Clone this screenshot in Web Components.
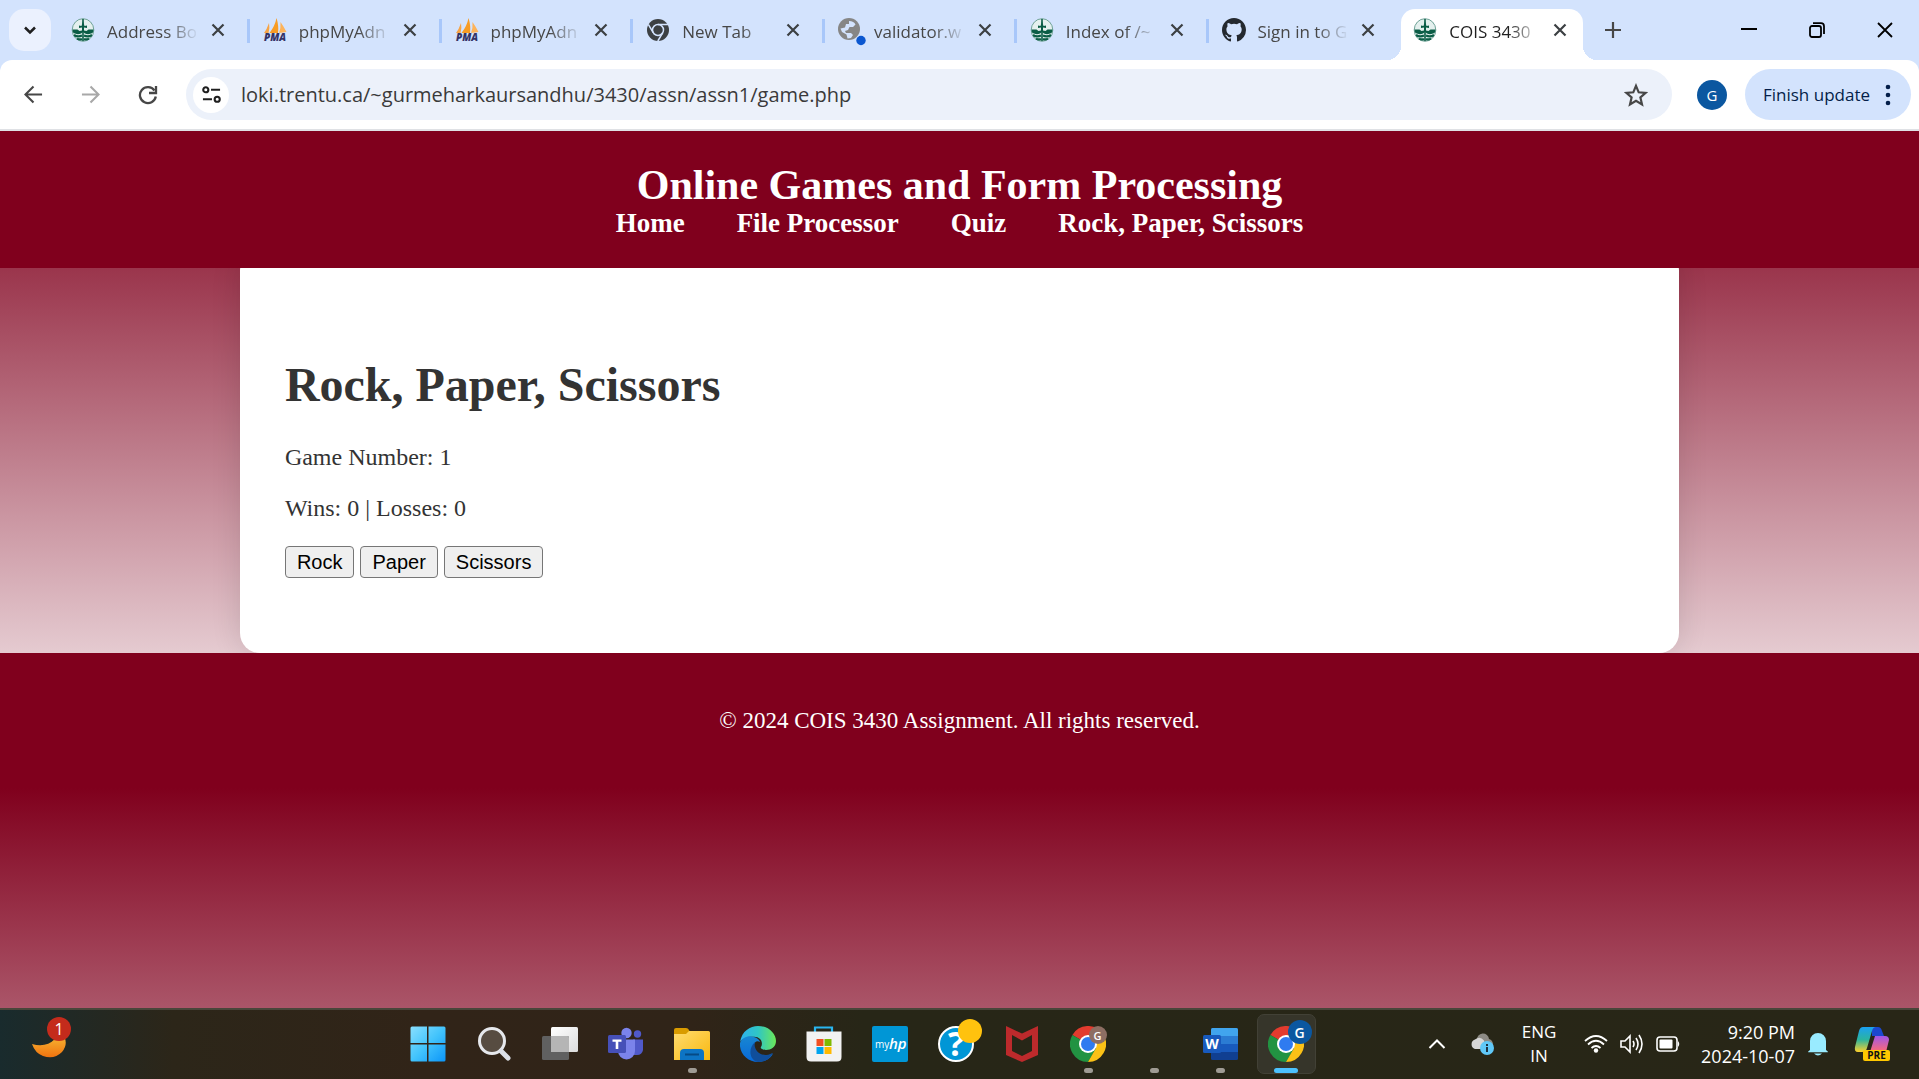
<!DOCTYPE html>
<html lang="en">
<head>
<meta charset="utf-8">
<title>COIS 3430</title>
<style>
html,body{margin:0;height:100%}
body{font-family:"Open Sans","Noto Sans",sans-serif;overflow:hidden}
</style>
</head>
<body>
<desktop-screen>
  <browser-window slot="window">
    <site-page>
      <game-panel heading="Rock, Paper, Scissors"></game-panel>
    </site-page>
  </browser-window>
</desktop-screen>
<script>
const ICONS = {
  down:`<svg viewBox="0 0 24 24"><path d="M6 9l6 6 6-6" fill="none" stroke="#1f1f1f" stroke-width="3"/></svg>`,
  trent:`<svg viewBox="0 0 24 24"><ellipse cx="12" cy="12" rx="10.8" ry="11.3" fill="#e4f0ee" stroke="#6fa297" stroke-width="1"/><path d="M1.500 11.500h5l2 1.500 2.500-.5V9.500L8 10V7.500l2.500.5L12 3l1.500 5 2.500-.5V10l-3-.5v3l2.500.5 2-1.500h5q0 2-1 3.500-4 2-7.500.5L12 14l-2 1.500q-3.500 1.500-7.500-.5-1-1.500-1-3.500z" fill="#0b5d46"/><path d="M12 1v22" stroke="#0b5d46" stroke-width="1.600"/><g fill="none" stroke="#0b5d46" stroke-width="2.200"><path d="M3 17Q7 19.500 11 17.500M21 17Q17 19.500 13 17.500M6 20.700Q9 22 11 21M18 20.700Q15 22 13 21"/></g></svg>`,
  pma:`<svg viewBox="0 0 24 24"><path d="M1 15Q4 11 6 5Q7 10 5.500 15z" fill="#f7a445"/><path d="M6.500 15Q12 8 13.500 0Q16 8 15 15z" fill="#f89c24"/><path d="M16 15Q18 10 17.500 4Q21 9 23.500 14z" fill="#fdb35a"/><text x="12" y="23" text-anchor="middle" font-family="Open Sans,sans-serif" font-style="italic" font-weight="800" font-size="10" fill="#333366">PMA</text></svg>`,
  chromegrey:`<svg viewBox="0 0 24 24"><circle cx="12" cy="12" r="11" fill="#3c4043"/><g stroke="#d3e3fd" stroke-width="1.500" fill="none"><path d="M12 6.500H22M7.200 14.700L2.300 6.400M16.800 14.700L11.800 23"/><circle cx="12" cy="12" r="5.500"/></g><circle cx="12" cy="12" r="3.700" fill="#3c4043"/></svg>`,
  globe:`<svg viewBox="0 0 24 24" style="overflow:visible"><circle cx="11" cy="11" r="11" fill="#868686"/><path d="M11 3q5 0 6.500 3.500L15 9h-3.500L10 12l-3 1 1 2h5l2 2-2 3-3.500.5-1-4L4 14 2.500 10.500 7 9.500 8 6h3z" fill="#d3e3fd"/><circle cx="23" cy="22.500" r="4.700" fill="#0b57d0"/></svg>`,
  github:`<svg viewBox="0 0 16 16"><path fill="#24292f" d="M8 0C3.580 0 0 3.580 0 8c0 3.540 2.290 6.530 5.470 7.590.4.070.55-.17.55-.38 0-.19-.01-.82-.01-1.490-2.010.37-2.530-.49-2.690-.94-.09-.23-.48-.94-.82-1.130-.28-.15-.68-.52-.01-.53.63-.01 1.080.58 1.230.82.72 1.210 1.870.87 2.330.66.07-.52.28-.87.51-1.070-1.780-.2-3.640-.89-3.640-3.950 0-.87.31-1.590.82-2.150-.08-.2-.36-1.020.08-2.120 0 0 .67-.21 2.200.82a7.500 7.500 0 014 0c1.530-1.040 2.200-.82 2.200-.82.44 1.100.16 1.920.08 2.120.51.56.82 1.270.82 2.150 0 3.070-1.870 3.750-3.650 3.950.29.25.54.73.54 1.480 0 1.070-.01 1.930-.01 2.200 0 .21.15.46.55.38A8 8 0 0016 8c0-4.420-3.580-8-8-8z"/></svg>`,
  close:`<svg viewBox="0 0 14 14"><path d="M1.500 1.500l11 11m0-11l-11 11" stroke="#3c4043" stroke-width="2.200"/></svg>`,
  plus:`<svg viewBox="0 0 16 16"><path d="M8 0v16M0 8h16" stroke="#474747" stroke-width="2.200"/></svg>`,
  min:`<svg viewBox="0 0 16 16"><path d="M0 7h16" stroke="#000" stroke-width="2"/></svg>`,
  restore:`<svg viewBox="0 0 16 16"><rect x="1" y="4" width="11" height="11" rx="2" fill="none" stroke="#000" stroke-width="1.800"/><path d="M4 1.200h8a3 3 0 013 3V12" fill="none" stroke="#000" stroke-width="1.800"/></svg>`,
  winclose:`<svg viewBox="0 0 16 16"><path d="M1 1l14 14M15 1L1 15" stroke="#000" stroke-width="1.800"/></svg>`,
  back:`<svg viewBox="0 0 20 20"><path d="M19 10H2M10 1.500L1.500 10l8.500 8.500" fill="none" stroke="#474747" stroke-width="2.200"/></svg>`,
  forward:`<svg viewBox="0 0 20 20"><path d="M1 10h17M10 1.500l8.500 8.500-8.500 8.500" fill="none" stroke="#a8a8a8" stroke-width="2.200"/></svg>`,
  reload:`<svg viewBox="0 0 20 20"><path d="M17.800 11.500A8 8 0 1116.500 5.500" fill="none" stroke="#474747" stroke-width="2.300"/><path d="M18 1v7h-7" fill="none" stroke="#474747" stroke-width="2.300"/></svg>`,
  tune:`<svg viewBox="0 0 20 20"><g fill="none" stroke="#1f1f1f" stroke-width="2.200"><circle cx="4" cy="5" r="2.700"/><path d="M9.500 5H19M1 15h9.500"/><circle cx="16" cy="15" r="2.700"/></g></svg>`,
  star:`<svg viewBox="0 0 24 24"><path d="M12 2.800l2.700 6.500 7 .6-5.300 4.600 1.600 6.900L12 17.700l-6 3.700 1.600-6.900-5.300-4.600 7-.6z" fill="none" stroke="#474747" stroke-width="2.200"/></svg>`,
  dots:`<svg viewBox="0 0 6 22"><g fill="#041e49"><circle cx="3" cy="3" r="2.300"/><circle cx="3" cy="11" r="2.300"/><circle cx="3" cy="19" r="2.300"/></g></svg>`,
  moon:`<svg viewBox="0 0 36 36"><defs><linearGradient id="m" x2="0" y2="1"><stop offset="0" stop-color="#f7c53b"/><stop offset="1" stop-color="#f0730f"/></linearGradient></defs><path d="M30 5q9 12 1 21-8 8-19 4-8-3-11-12 14 4 23-5 4-4 6-8z" fill="url(#m)"/></svg>`,
  windows:`<svg viewBox="0 0 36 36"><defs><linearGradient id="w" x1="0" y1="0" x2="36" y2="36" gradientUnits="userSpaceOnUse"><stop stop-color="#8be0ff"/><stop offset=".5" stop-color="#43c4fc"/><stop offset="1" stop-color="#0a94f8"/></linearGradient></defs><path fill="url(#w)" d="M2 .5h15v16.500H.500V2A1.500 1.500 0 012 .5zM18.500.5H34A1.500 1.500 0 0135.500 2v15h-17zM.5 18.500H17v17H2A1.500 1.500 0 01.500 34zM18.500 18.500h17V34a1.500 1.500 0 01-1.500 1.500H18.500z"/></svg>`,
  search:`<svg viewBox="0 0 36 36"><circle cx="16" cy="15" r="12.500" fill="#574c41" stroke="#e6e8ec" stroke-width="3"/><path d="M25 25l7 7" stroke="#dce0e8" stroke-width="5" stroke-linecap="round"/></svg>`,
  taskview:`<svg viewBox="0 0 36 36"><defs><linearGradient id="t" x2="1" y2="1"><stop stop-color="#fff"/><stop offset="1" stop-color="#dcdcdc"/></linearGradient></defs><rect x="9" y="1" width="27" height="25" rx="1.500" fill="url(#t)"/><rect x="0" y="10" width="27" height="24" rx="1.500" fill="#606060"/><path d="M9 10h16.500a1.500 1.500 0 011.500 1.500V26H9z" fill="#b5b5b5"/></svg>`,
  teams:`<svg viewBox="0 0 36 36"><circle cx="18.500" cy="7" r="5.200" fill="#7b83eb"/><circle cx="29.500" cy="8" r="3.700" fill="#5059c9"/><path d="M25 13.500h10V24q-1 5-6 5h-4z" fill="#5059c9"/><path d="M10 13.500h17V25a8.500 8.500 0 01-17 0z" fill="#7b83eb"/><rect x="0" y="9" width="18" height="18" rx="1.500" fill="#4650b8"/><path d="M4.500 13.500h9v2.300H10.300V23H7.700v-7.200H4.500z" fill="#fff"/></svg>`,
  folder:`<svg viewBox="0 0 36 36"><defs><linearGradient id="f" x2="1" y2="1"><stop stop-color="#ffdc70"/><stop offset="1" stop-color="#f9b80f"/></linearGradient></defs><path d="M0 4a2 2 0 012-2h10q2 0 3 2l1 2v6H0z" fill="#d99b00"/><path d="M0 8h12l3-3h19.500A1.500 1.500 0 0136 6.500V34H0z" fill="url(#f)"/><path d="M6 34V27q0-4 4-4h16q4 0 4 4v7z" fill="#0d74c4"/><path d="M11 28.500h14" stroke="#064a85" stroke-width="2"/></svg>`,
  edge:`<svg viewBox="0 0 36 36"><defs><linearGradient id="e" x2="1"><stop stop-color="#2cb0ef"/><stop offset=".5" stop-color="#30c6c4"/><stop offset="1" stop-color="#6be858"/></linearGradient><linearGradient id="e2" x2="0" y2="1"><stop stop-color="#1887d2"/><stop offset="1" stop-color="#0868d8"/></linearGradient></defs><path d="M0 16C2 5 10 0 18 0c11 0 18 8 18 15 0 6-5 9-10 9-4 0-6-2-5-3 2-3 1-9-5-10C9 10 3 12 0 16z" fill="url(#e)"/><path d="M0 17c2-6 9-8 14-6 4 1 6 4 6 5-3-2-7 0-6 6 1 7 9 12 19 6-4 6-10 8-15 8C8 36-1 28 0 17z" fill="url(#e2)"/><path d="M15 16c-2 7 4 13 11 13 3 0 6-2 7-2-3 6-8 9-15 9C9 34 8 22 15 16z" fill="#104e9b"/></svg>`,
  store:`<svg viewBox="0 0 36 36"><path d="M9 7V1.500h17V7" fill="none" stroke="#29b6f0" stroke-width="2.200"/><path d="M.5 5.500h35V31q0 4.500-4.500 4.500H5Q.5 35.500.5 31z" fill="#f2f2f2"/><path d="M10.500 13h7v7h-7z" fill="#f25022"/><path d="M18.500 13h7v7h-7z" fill="#7fba00"/><path d="M10.500 21h7v7h-7z" fill="#00a4ef"/><path d="M18.500 21h7v7h-7z" fill="#ffb900"/></svg>`,
  myhp:`<svg viewBox="0 0 36 36"><rect width="36" height="36" rx="2" fill="#0096d6"/><text x="3" y="22" font-family="Open Sans,sans-serif" font-size="10" fill="#fff">my</text><text x="17" y="23" font-family="Open Sans,sans-serif" font-size="15" font-style="italic" font-weight="600" fill="#fff">hp</text></svg>`,
  help:`<svg viewBox="0 0 36 36" style="overflow:visible"><circle cx="18" cy="18" r="17" fill="#0096d6" stroke="#fff" stroke-width="2"/><text x="18" y="30" text-anchor="middle" font-family="Open Sans,sans-serif" font-size="34" font-weight="700" fill="#fff">?</text><circle cx="32" cy="5" r="12" fill="#ffc20e"/></svg>`,
  mcafee:`<svg viewBox="0 0 36 36"><path fill="#bd2a2c" fill-rule="evenodd" d="M2 0l16 7.500L34 0v29l-16 7L2 29zM8 9v16l10 5 10-5V9l-10 5.500z"/></svg>`,
  word:`<svg viewBox="0 0 36 36"><rect x="9" y="2" width="27" height="32" rx="1.500" fill="#103f91"/><path d="M9 18h27v8H9z" fill="#185abd"/><path d="M9 10h27v8H9z" fill="#2b7cd3"/><path d="M9 10V3.500A1.500 1.500 0 0110.500 2h24A1.500 1.500 0 0136 3.500V10z" fill="#41a5ee"/><rect x="1" y="9" width="18" height="18" rx="1.500" fill="#185abd"/><text x="10" y="23" text-anchor="middle" font-family="Open Sans,sans-serif" font-size="14" font-weight="700" fill="#fff">W</text></svg>`,
  chrome:`<svg viewBox="0 0 36 36"><path d="M18 18L2.400 9A18 18 0 0133.600 9z" fill="#e33b2e"/><path d="M18 18L2.400 9A18 18 0 0018 36l8-13z" fill="#229342"/><path d="M18 9h15.600A18 18 0 0118 36l7.800-13.500z" fill="#fbc116"/><circle cx="18" cy="18" r="9" fill="#fff"/><circle cx="18" cy="18" r="7" fill="#2f7bf0"/></svg>`,
  blank:`<svg viewBox="0 0 36 36"></svg>`,
  up:`<svg viewBox="0 0 18 18"><path d="M1.500 13L9 5.500l7.500 7.500" fill="none" stroke="#fff" stroke-width="2"/></svg>`,
  cloud:`<svg viewBox="0 0 24 24"><path d="M7 8a6 6 0 0112-1q4 1 4 6l-4 3z" fill="#8d8b85"/><path d="M5 17a5 5 0 010-9.500q5-4 9 1l1 8.500z" fill="#d6d6d6"/><circle cx="17" cy="16" r="7" fill="#60c8f8"/><path d="M17 12v2M17 15v5" stroke="#1d3344" stroke-width="2"/></svg>`,
  wifi:`<svg viewBox="0 0 24 24"><g fill="none" stroke="#fff" stroke-width="1.800"><path d="M1 9Q12-1 23 9M4 12.500Q12 5 20 12.500M7.500 16q4.500-4 9 0"/></g><circle cx="12" cy="18.500" r="2.200" fill="#fff"/></svg>`,
  volume:`<svg viewBox="0 0 24 24"><g fill="none" stroke="#fff" stroke-width="1.600"><path d="M1 9h4l5-5v16l-5-5H1z"/><path d="M13 9q2 3 0 6M16 6q4 6 0 12M19 3q6 9 0 18"/></g></svg>`,
  battery:`<svg viewBox="0 0 24 24"><rect x="1" y="5" width="20" height="14" rx="3" fill="none" stroke="#fff" stroke-width="1.600"/><rect x="3.500" y="7.500" width="13" height="9" rx="1" fill="#fff"/><path d="M22 9q2.500 3 0 6z" fill="#fff"/></svg>`,
  bell:`<svg viewBox="0 0 20 24"><path d="M2 18V9a8 8 0 0116 0v9l1.800 1.500v.8H.2v-.8zM6 21.500h8q-4 4-8 0z" fill="#99ebff"/></svg>`,
  copilot:`<svg viewBox="0 0 36 36"><defs><linearGradient id="c" x2="0" y2="1"><stop stop-color="#1ba0f2"/><stop offset=".5" stop-color="#2bb4a0"/><stop offset="1" stop-color="#ffd02a"/></linearGradient><linearGradient id="c2" x2="0" y2="1"><stop stop-color="#a057e8"/><stop offset="1" stop-color="#ff6b70"/></linearGradient></defs><path d="M18 1h6q3 0 4 4l2 5H18z" fill="#1b48cf"/><path d="M9 1h13q-3 0-4 4l-5 17q-1 4-5 4H4q-4 0-3-5L5 5q1-4 4-4z" fill="url(#c)"/><path d="M21 10h10q4 0 4 4l-3 12H16z" fill="url(#c2)"/><rect x="9" y="24" width="27" height="11" rx="2" fill="#ffc800"/><text x="22.500" y="33" text-anchor="middle" font-family="Open Sans,sans-serif" font-size="10" font-weight="700" fill="#111">PRE</text></svg>`
};

function define(name, render) {
  customElements.define(name, class extends HTMLElement {
    connectedCallback() {
      if (this.shadowRoot) return;
      const t = document.createElement('template');
      t.innerHTML = '<style>*{box-sizing:border-box}button{font:inherit;color:inherit;border:0;background:none;padding:0;margin:0;display:flex;align-items:center;justify-content:center}</style>' + render(this);
      this.attachShadow({mode:'open'}).append(t.content.cloneNode(true));
    }
  });
}

define('ui-icon', el => `<style>:host{display:block;flex:none;width:${el.getAttribute('size')||24}px;height:${el.getAttribute('size')||24}px}svg{display:block;width:100%;height:100%}</style>${ICONS[el.getAttribute('name')]}`);

define('browser-tab', el => `<style>
:host{display:flex;flex:0 1 192px;min-width:0;position:relative;height:51px;color:#474747;font-size:17px}
.tab{flex:1;min-width:0;display:flex;align-items:center;margin:0 7px 0 3px;padding:0 12px 9px 12px}
.title{flex:1;min-width:0;margin:3px 8px 0 12px;line-height:26px;white-space:nowrap;overflow:hidden;-webkit-mask:linear-gradient(to right,#000 64%,transparent);mask:linear-gradient(to right,#000 64%,transparent)}
button{width:22px;height:24px}
.sep{position:absolute;right:-2px;top:10px;width:3px;height:24px;background:#a8c7fa}
:host([last]) .sep,:host([active]) .sep{display:none}
:host([active]){color:#1f1f1f}
:host([active]) .tab{background:#fff;border-radius:14px 14px 0 0;position:relative}
:host([active]) .tab::before,:host([active]) .tab::after{content:"";position:absolute;bottom:0;width:14px;height:14px}
:host([active]) .tab::before{right:100%;background:radial-gradient(circle at 0 0,transparent 14px,#fff 14px)}
:host([active]) .tab::after{left:100%;background:radial-gradient(circle at 100% 0,transparent 14px,#fff 14px)}
</style><div class="tab"><ui-icon name="${el.getAttribute('icon')}"></ui-icon><span class="title"><slot></slot></span><button aria-label="Close tab"><ui-icon name="close" size="14"></ui-icon></button></div><span class="sep"></span>`);

define('tab-strip', () => `<style>
:host{display:flex;height:60px;background:#d3e3fd;padding:9px 0 0 9px}
.list{width:42px;height:42px;border-radius:15px;background:#ebf1fe;flex:none;margin-right:5px}
.tabs{display:flex;flex:0 1 1534px;min-width:0}
.new{width:46px;height:42px}
.sys{display:flex;margin-left:auto}
.sys button{width:68px;height:42px}
</style><button class="list" aria-label="Search tabs"><ui-icon name="down" size="20"></ui-icon></button>
<div class="tabs">
<browser-tab icon="trent">Address Bo</browser-tab><browser-tab icon="pma">phpMyAdn</browser-tab><browser-tab icon="pma">phpMyAdn</browser-tab><browser-tab icon="chromegrey">New Tab</browser-tab><browser-tab icon="globe">validator.w</browser-tab><browser-tab icon="trent">Index of /~</browser-tab><browser-tab icon="github" last>Sign in to G</browser-tab><browser-tab icon="trent" active>COIS 3430</browser-tab>
</div><button class="new" aria-label="New tab"><ui-icon name="plus" size="16"></ui-icon></button>
<div class="sys"><button aria-label="Minimize"><ui-icon name="min" size="16"></ui-icon></button><button aria-label="Restore"><ui-icon name="restore" size="16"></ui-icon></button><button aria-label="Close"><ui-icon name="winclose" size="16"></ui-icon></button></div>`);

define('tool-bar', () => `<style>
:host{display:block;background:#d3e3fd}
.bar{display:flex;align-items:center;height:71px;padding:0 8px 0 5px;background:#fff;border-bottom:2px solid #dfe1e5;border-radius:12px 12px 0 0}
.nav{width:57px;height:44px}
.omni{display:flex;align-items:center;flex:1;height:51px;margin-left:10px;border-radius:26px;background:#ecf1fa;padding:0 24px 0 7px}
.site{width:36px;height:36px;border-radius:50%;background:#fff;flex:none}
input{flex:1;min-width:0;border:0;outline:0;background:none;font:20px/28px "Open Sans",sans-serif;color:#3a3a3a;padding:0;margin:0 0 0 12px}
.avatar{width:30px;height:30px;border-radius:50%;background:#0b57a0;color:#fff;font-size:15px;margin:0 18px 0 25px;flex:none}
.update{height:51px;border-radius:26px;background:#d3e3fd;color:#041e49;font-size:17px;padding:0 12px 0 18px;gap:7px;flex:none;white-space:nowrap}
</style><div class="bar"><button class="nav" aria-label="Back"><ui-icon name="back" size="19"></ui-icon></button><button class="nav" aria-label="Forward"><ui-icon name="forward" size="19"></ui-icon></button><button class="nav" aria-label="Reload"><ui-icon name="reload" size="20"></ui-icon></button>
<div class="omni"><button class="site" aria-label="Site information"><ui-icon name="tune" size="19"></ui-icon></button><input aria-label="Address" value="loki.trentu.ca/~gurmeharkaursandhu/3430/assn/assn1/game.php"><button aria-label="Bookmark"><ui-icon name="star"></ui-icon></button></div>
<button class="avatar">G</button><button class="update">Finish update<ui-icon name="dots" size="22"></ui-icon></button></div>`);

define('browser-window', () => `<style>
:host{display:flex;flex-direction:column;min-height:0;height:100%}
main{flex:1;min-height:0;overflow:hidden}
</style><tab-strip></tab-strip><tool-bar></tool-bar><main><slot></slot></main>`);

define('site-page', () => `<style>
:host{display:block;height:100%;font-family:"Liberation Serif",serif;--wine:#80001d;background:linear-gradient(var(--wine),#fff) 0 0/100% 657px repeat-y}
header{position:relative;z-index:1;background:var(--wine);color:#fff;text-align:center;padding:31px 0 30px}
h1{margin:0;font-size:42px;line-height:46px}
nav{display:flex;justify-content:center;gap:52px;font-size:27px;font-weight:700;line-height:30px}
a{color:inherit;text-decoration:none}
footer{background:var(--wine);color:#fff;text-align:center;padding:54px 0}
p{margin:0;font-size:23px;line-height:27px}
</style><header><h1>Online Games and Form Processing</h1><nav><a href="#home">Home</a><a href="#files">File Processor</a><a href="#quiz">Quiz</a><a href="#game">Rock, Paper, Scissors</a></nav></header>
<slot></slot><footer><p>© 2024 COIS 3430 Assignment. All rights reserved.</p></footer>`);

define('game-panel', el => `<style>
:host{display:block;width:75%;margin:-18px auto 0;box-sizing:border-box;background:#fff;border-radius:20px;box-shadow:0 0 30px rgba(0,0,0,.12);padding:108px 45px 75px;color:#333}
h2{margin:0 0 33px;font-size:48px;line-height:53px}
p{margin:0 0 24px;font-size:24px;line-height:27px}
form{display:flex;gap:6px}
form button{font:20px/24px "Liberation Sans",Arial,sans-serif;color:#000;background:#efefef;border:1px solid #767676;border-radius:4px;height:32px;padding:0 11px}
</style><h2>${el.getAttribute('heading')}</h2><p>Game Number: 1</p><p>Wins: 0 | Losses: 0</p><form><button type="button">Rock</button><button type="button">Paper</button><button type="button">Scissors</button></form>`);

define('task-app', el => `<style>
:host{display:flex;width:66px;height:69px;align-items:center;justify-content:center;position:relative}
button{width:59px;height:60px;border-radius:7px;position:relative}
.badge{position:absolute;border-radius:50%;color:#fff;display:grid;place-items:center;font-weight:600}
.small{right:11px;top:12px;width:18px;height:18px;background:#8d6e63;font-size:11px}
.big{right:3px;top:5px;width:24px;height:24px;background:#0b57a0;font-size:14px}
:host([run]) button::after{content:"";position:absolute;bottom:1px;width:9px;height:5px;border-radius:3px;background:#9f9b94}
:host([active]) button{background:#36352a;border:1px solid #424136}
:host([active]) button::after{width:24px;background:#4cc2ff;bottom:0}
</style><button aria-label="${el.getAttribute('label')}"><ui-icon name="${el.getAttribute('icon')}" size="36"></ui-icon>${el.hasAttribute('badge')?`<span class="badge ${el.getAttribute('badge')}">G</span>`:''}</button>`);

define('task-bar', () => `<style>
:host{display:flex;align-items:center;height:71px;box-sizing:border-box;padding-bottom:1px;border-top:2px solid #49463a;background:linear-gradient(to right,#192b2d 0,#2c2619 9%,#312418 22%,#302418 36%,#272617 45%,#282617 100%);color:#fff;font-size:17px}
.widgets{flex:0 0 395px;padding-left:31px}
.widgets button{position:relative}
.count{position:absolute;left:16px;top:-9px;width:24px;height:24px;border-radius:50%;background:#c42b1c;font-size:16px;display:grid;place-items:center}
.apps{display:flex}
.tray{display:flex;align-items:center;margin-left:auto;padding-right:29px;flex:none}
.two{line-height:24px;text-align:center;display:block}
.lang{width:60px;margin-left:15px}
.net{gap:12px;margin-left:15px}
.clock{text-align:right;margin-left:21px;margin-right:11px;font-size:18px}
.cloud{margin-left:24px}
.pre{margin-left:24px}
</style><div class="widgets"><button aria-label="Widgets"><ui-icon name="moon" size="36"></ui-icon><span class="count">1</span></button></div>
<div class="apps"><task-app icon="windows" label="Start"></task-app><task-app icon="search" label="Search"></task-app><task-app icon="taskview" label="Task view"></task-app><task-app icon="teams" label="Teams"></task-app><task-app icon="folder" run label="Files"></task-app><task-app icon="edge" label="Edge"></task-app><task-app icon="store" label="Store"></task-app><task-app icon="myhp" label="myHP"></task-app><task-app icon="help" label="Help"></task-app><task-app icon="mcafee" label="McAfee"></task-app><task-app icon="chrome" run badge="small" label="Chrome"></task-app><task-app icon="blank" run label="App"></task-app><task-app icon="word" run label="Word"></task-app><task-app icon="chrome" run active badge="big" label="Chrome"></task-app></div>
<div class="tray"><button aria-label="Hidden icons"><ui-icon name="up" size="18"></ui-icon></button><ui-icon class="cloud" name="cloud"></ui-icon><button class="two lang">ENG<br>IN</button><button class="net" aria-label="Network, volume, battery"><ui-icon name="wifi"></ui-icon><ui-icon name="volume"></ui-icon><ui-icon name="battery"></ui-icon></button><button class="two clock">9:20 PM<br>2024-10-07</button><ui-icon name="bell" size="24"></ui-icon><button class="pre" aria-label="Copilot"><ui-icon name="copilot" size="36"></ui-icon></button></div>`);

define('desktop-screen', () => `<style>
:host{display:flex;flex-direction:column;height:100vh}
.win{flex:1;min-height:0}
</style><div class="win"><slot name="window"></slot></div><task-bar></task-bar>`);
</script>
</body>
</html>
